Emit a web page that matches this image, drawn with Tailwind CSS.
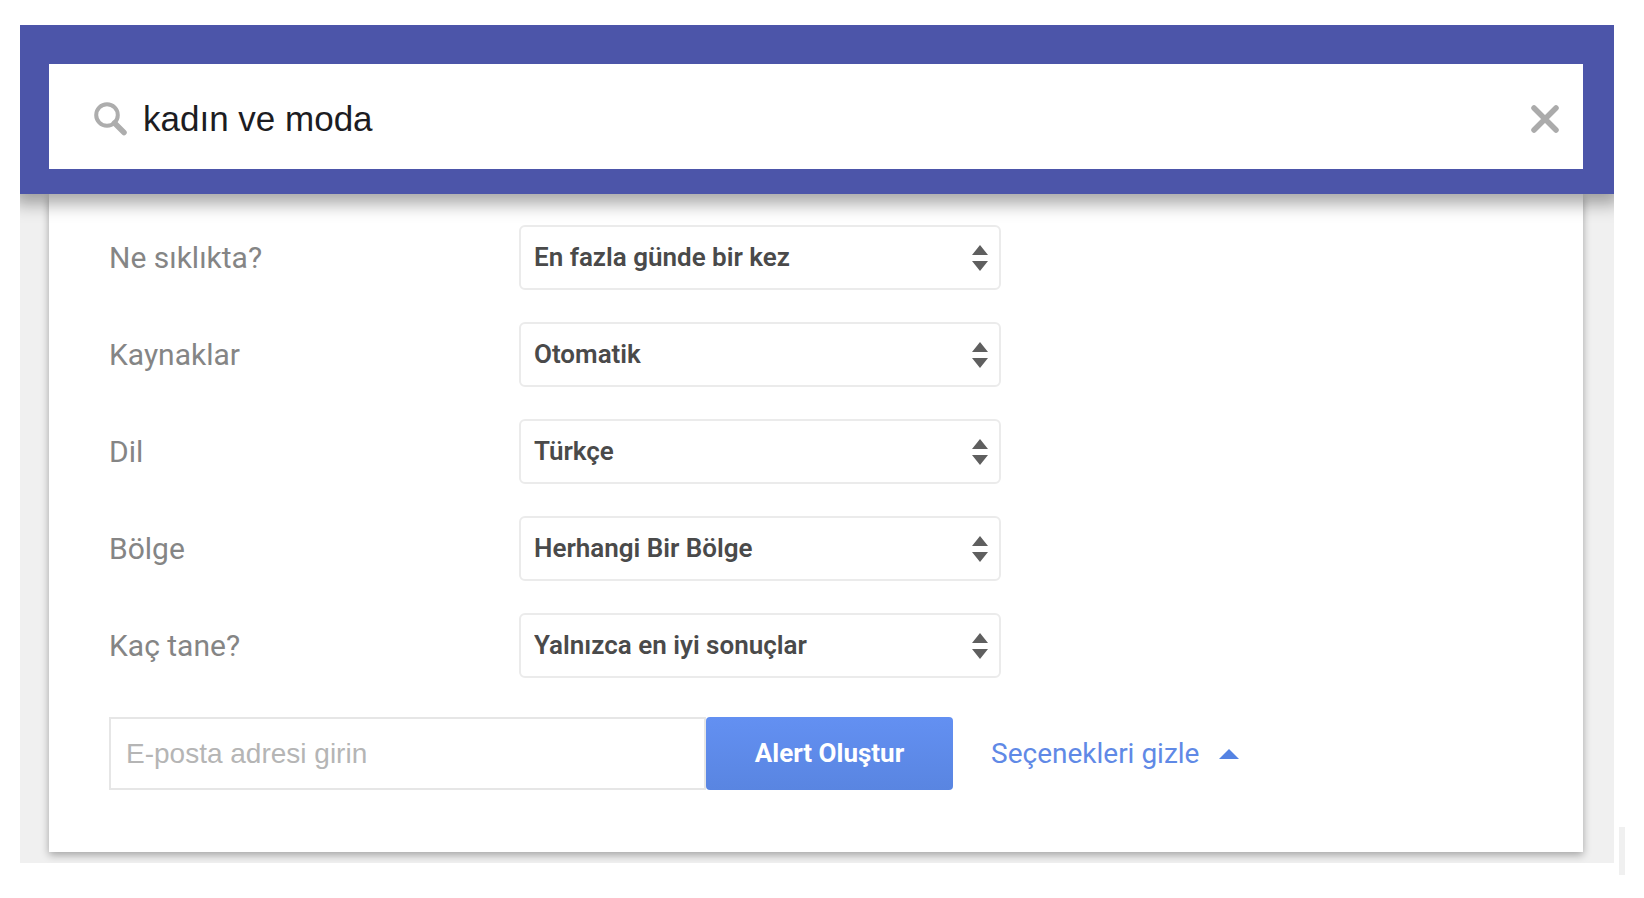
<!DOCTYPE html>
<html lang="tr">
<head>
    <meta charset="UTF-8">
    <meta name="viewport" content="width=device-width, initial-scale=1.0">
    <title>Alert Oluştur</title>
    <script src="https://cdn.jsdelivr.net/npm/@tailwindcss/browser@4"></script>
</head>
<body class="bg-white font-['Roboto',sans-serif]">
<div class="flex gap-[5px] pl-5 pr-[19px] pt-[25px]">
    <main class="flex-1 min-w-0 mb-3 pb-[11px] bg-[#f0f0f0] overflow-hidden">

        <!-- Search bar -->
        <header class="relative z-10 bg-[#4c55a9] pt-[39px] pb-[25px] pl-[29px] pr-[31px] shadow-[0_4px_16px_6px_rgba(0,0,0,0.34)]">
            <div class="flex items-center bg-white h-[105px] pl-[45px] pr-[23px] pt-1">
                <svg class="w-[33px] h-[34px] shrink-0" viewBox="0 0 33 34" fill="none" stroke="#adadad">
                    <circle cx="13" cy="13" r="10.8" stroke-width="4"/>
                    <path d="M20.5 21L30 30.5" stroke-width="5.5" stroke-linecap="round"/>
                </svg>
                <input type="text" value="kadın ve moda" aria-label="Arama sorgusu"
                       class="flex-1 min-w-0 ml-4 h-14 text-[35px] text-[#1c1c22] font-['Liberation_Sans',sans-serif] focus:outline-none">
                <button type="button" aria-label="Temizle" class="shrink-0 cursor-pointer">
                    <svg class="w-[30px] h-[30px]" viewBox="0 0 30 30" fill="none" stroke="#ababab" stroke-width="5.5" stroke-linecap="round">
                        <path d="M4 4L26 26M26 4L4 26"/>
                    </svg>
                </button>
            </div>
        </header>

        <!-- Alert options -->
        <form class="ml-[29px] mr-[31px] bg-white pt-[31px] pb-[62px] px-[60px] shadow-[0_3px_8px_rgba(0,0,0,0.32)]">
            <div class="flex flex-col gap-8">
                <div class="flex items-center">
                    <label for="frequency" class="w-[410px] text-[30px] text-[#858585]">Ne sıklıkta?</label>
                    <div class="relative w-[482px]">
                        <select id="frequency" class="appearance-none w-full h-[65px] px-[13px] bg-white border-2 border-[#ebebeb] rounded-md text-[26px] font-semibold text-[#4a4a4a]">
                            <option>En fazla günde bir kez</option>
                        </select>
                        <svg class="absolute right-[13px] top-1/2 -translate-y-1/2 w-4 h-[26px] pointer-events-none" viewBox="0 0 16 26" fill="#5f5f5f"><path d="M0 10L8 0L16 10ZM0 16H16L8 26Z"/></svg>
                    </div>
                </div>
                <div class="flex items-center">
                    <label for="sources" class="w-[410px] text-[30px] text-[#858585]">Kaynaklar</label>
                    <div class="relative w-[482px]">
                        <select id="sources" class="appearance-none w-full h-[65px] px-[13px] bg-white border-2 border-[#ebebeb] rounded-md text-[26px] font-semibold text-[#4a4a4a]">
                            <option>Otomatik</option>
                        </select>
                        <svg class="absolute right-[13px] top-1/2 -translate-y-1/2 w-4 h-[26px] pointer-events-none" viewBox="0 0 16 26" fill="#5f5f5f"><path d="M0 10L8 0L16 10ZM0 16H16L8 26Z"/></svg>
                    </div>
                </div>
                <div class="flex items-center">
                    <label for="language" class="w-[410px] text-[30px] text-[#858585]">Dil</label>
                    <div class="relative w-[482px]">
                        <select id="language" class="appearance-none w-full h-[65px] px-[13px] bg-white border-2 border-[#ebebeb] rounded-md text-[26px] font-semibold text-[#4a4a4a]">
                            <option>Türkçe</option>
                        </select>
                        <svg class="absolute right-[13px] top-1/2 -translate-y-1/2 w-4 h-[26px] pointer-events-none" viewBox="0 0 16 26" fill="#5f5f5f"><path d="M0 10L8 0L16 10ZM0 16H16L8 26Z"/></svg>
                    </div>
                </div>
                <div class="flex items-center">
                    <label for="region" class="w-[410px] text-[30px] text-[#858585]">Bölge</label>
                    <div class="relative w-[482px]">
                        <select id="region" class="appearance-none w-full h-[65px] px-[13px] bg-white border-2 border-[#ebebeb] rounded-md text-[26px] font-semibold text-[#4a4a4a]">
                            <option>Herhangi Bir Bölge</option>
                        </select>
                        <svg class="absolute right-[13px] top-1/2 -translate-y-1/2 w-4 h-[26px] pointer-events-none" viewBox="0 0 16 26" fill="#5f5f5f"><path d="M0 10L8 0L16 10ZM0 16H16L8 26Z"/></svg>
                    </div>
                </div>
                <div class="flex items-center">
                    <label for="amount" class="w-[410px] text-[30px] text-[#858585]">Kaç tane?</label>
                    <div class="relative w-[482px]">
                        <select id="amount" class="appearance-none w-full h-[65px] px-[13px] bg-white border-2 border-[#ebebeb] rounded-md text-[26px] font-semibold text-[#4a4a4a]">
                            <option>Yalnızca en iyi sonuçlar</option>
                        </select>
                        <svg class="absolute right-[13px] top-1/2 -translate-y-1/2 w-4 h-[26px] pointer-events-none" viewBox="0 0 16 26" fill="#5f5f5f"><path d="M0 10L8 0L16 10ZM0 16H16L8 26Z"/></svg>
                    </div>
                </div>
            </div>

            <!-- Email + submit -->
            <div class="flex items-center mt-[39px]">
                <input type="email" placeholder="E-posta adresi girin" aria-label="E-posta adresi"
                       class="w-[597px] h-[73px] px-[15px] border-2 border-[#e6e6e6] text-[28px] placeholder:text-[#b5b5b5] font-['Liberation_Sans',sans-serif] focus:outline-none">
                <button type="submit" class="w-[247px] h-[73px] rounded bg-linear-to-b from-[#6390f2] to-[#5985e1] text-[26px] font-bold text-white cursor-pointer">Alert Oluştur</button>
                <a href="#" class="flex items-center gap-5 ml-[38px] text-[28px] text-[#6089e6]">
                    Seçenekleri gizle
                    <svg class="w-5 h-[10px]" viewBox="0 0 20 10" fill="#5583e3"><path d="M0 10L10 0L20 10Z"/></svg>
                </a>
            </div>
        </form>
    </main>

    <div class="self-end w-[6px] h-12 bg-[#f0f0f0]"></div>
</div>
</body>
</html>
